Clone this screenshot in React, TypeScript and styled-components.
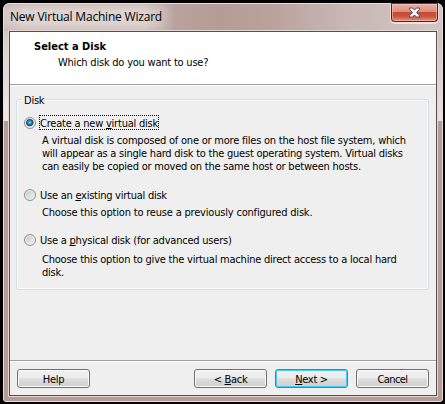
import React from "react";
import styled, { createGlobalStyle } from "styled-components";

const GlobalStyle = createGlobalStyle`
  body { margin: 0; background: #000; overflow: hidden; }
  * { box-sizing: border-box; }
`;

const Screen = styled.div`
  width: 445px;
  height: 404px;
  padding: 3px 2px 2px 3px;
  background: #000;
  color: #000;
  font: 11px/13px "DejaVu Sans Condensed", "DejaVu Sans", sans-serif;
  font-stretch: condensed;
`;

const Window = styled.div`
  width: 440px;
  height: 399px;
  padding: 0 5px 5px;
  border: 1px solid #e6dcda;
  border-radius: 6px 6px 3px 3px;
  background:
    linear-gradient(transparent 27px, #d6cac8 27px, #efeae9 117px, transparent 117px) 0 0 / 5px 100% no-repeat,
    linear-gradient(transparent 27px, #cfc0bd 27px, #e9e2e1 117px, transparent 117px) 100% 0 / 5px 100% no-repeat,
    linear-gradient(rgba(181, 156, 150, 0.35), transparent 7px, transparent 19px, rgba(181, 156, 150, 0.35)) 0 0 / 170px 27px no-repeat,
    linear-gradient(90deg, #d3c6c4 0, #ddd3d1 20px, #ddd3d1 140px, #cfc1be 156px, #b9a29d 171px, #b59c96 215px, #b9a19c 265px, #c9b8b5 345px, #d2c5c2 100%) 0 0 / 100% 27px no-repeat,
    #b59c96;
`;

const TitleBar = styled.div`
  display: flex;
  justify-content: space-between;
  height: 27px;
  margin-right: -1px;
`;

const Title = styled.div`
  padding: 5px 0 0 1px;
  font: 12px/16px "Open Sans", "Noto Sans", sans-serif;
  letter-spacing: -0.2px;
  white-space: nowrap;
`;

const CloseButton = styled.button`
  width: 47px;
  height: 19px;
  margin: -1px 0 0;
  padding: 0 0 1px;
  display: flex;
  align-items: center;
  justify-content: center;
  border: 1px solid #54201c;
  border-top-color: #5b3d3a;
  border-radius: 0 0 4px 4px;
  background: linear-gradient(#eab0a5 0, #de8c7d 45%, #c84a33 50%, #cc523c 72%, #e38e80 100%);
  box-shadow: inset 0 0 0 1px rgba(255, 205, 192, 0.55), 0 1px 0 1px rgba(244, 232, 230, 0.8);
`;

const Client = styled.div`
  display: flex;
  flex-direction: column;
  width: 428px;
  height: 365px;
  border: 1px solid #5a4e4c;
  background: #efefef;
  box-shadow: 0 0 0 1px #e3d7d4;
`;

const Header = styled.header`
  height: 54px;
  padding: 8px 0 0 24px;
  background: #fff;
  border-bottom: 1px solid #fff;
  box-shadow: inset 0 -1px #a0a0a0;
`;

const Text = styled.div<{ $track?: number }>`
  white-space: pre;
  letter-spacing: ${(p) => p.$track ?? -0.22}px;
`;

const Heading = styled(Text)`
  font-weight: bold;
`;

const Question = styled(Text)`
  margin: 3px 0 0 24px;
`;

const Body = styled.main`
  flex: 1;
  padding: 13px 7px 0 6px;
`;

const Group = styled.section`
  height: 191px;
  padding: 0 0 0 7px;
  border: 1px solid #d3dde4;
  border-radius: 3px;
  box-shadow: inset 0 0 0 1px #fafbfc;
`;

const Legend = styled(Text)`
  width: 23px;
  margin-top: -6px;
  padding-left: 1px;
  margin-left: -1px;
  background: #efefef;
`;

const Option = styled.label<{ $top: number }>`
  display: flex;
  align-items: flex-start;
  height: 15px;
  margin-top: ${(p) => p.$top}px;
`;

const Radio = styled.span<{ $checked?: boolean }>`
  flex: none;
  width: 12px;
  height: 12px;
  margin-top: 2px;
  border: 1px solid #8b8f92;
  border-radius: 50%;
  background: ${(p) =>
    p.$checked
      ? "radial-gradient(circle at 47% 45%, #8fdcf8 0, #2b93c4 1.6px, #123f63 3.3px, #dfe4e7 4.2px)"
      : "linear-gradient(135deg, #c3c7cb, #f4f4f4)"};
  box-shadow: inset 0 0 0 1px #f1f1f1;
`;

const OptionText = styled(Text)<{ $focus?: boolean }>`
  height: 15px;
  margin-left: 3px;
  padding-top: 1px;
  border: 1px dotted ${(p) => (p.$focus ? "#000" : "transparent")};
`;

const Description = styled.div<{ $top: number }>`
  margin: ${(p) => p.$top}px 0 0 18px;
`;

const Key = styled.span`
  text-decoration: underline;
  text-decoration-thickness: 1px;
  text-underline-offset: 1px;
  text-decoration-skip-ink: none;
`;

const Footer = styled.footer`
  display: flex;
  height: 35px;
  padding: 9px 7px 0;
  border-top: 1px solid #a0a0a0;
  box-shadow: inset 0 1px #fff;
`;

const PushButton = styled.button<{ $default?: boolean; $left?: number; $track?: number }>`
  width: 73px;
  height: 19px;
  margin: -1px 0 0 ${(p) => p.$left ?? 0}px;
  padding: 2px 0 0;
  color: #000;
  font: inherit;
  letter-spacing: ${(p) => p.$track ?? -0.3}px;
  border: 1px solid ${(p) => (p.$default ? "#3d85ad" : "#707070")};
  border-radius: 3px;
  background: linear-gradient(#f2f2f2 0, #ebebeb 48%, #dcdcdc 52%, #cfcfcf 100%);
  box-shadow: inset 0 0 0 1px ${(p) => (p.$default ? "#48d0f8" : "#fafafa")};
`;

const CloseIcon = () => (
  <svg width="13" height="11" viewBox="0 0 13 11">
    <path
      d="M1.5 1h3.2l1.8 2 1.8-2h3.2v1.3L8.6 5.5l2.9 3.2V10H8.3L6.5 8 4.7 10H1.5V8.7l2.9-3.2-2.9-3.2z"
      fill="#f6f6f6"
      stroke="#525360"
      strokeWidth="1"
      strokeLinejoin="round"
    />
  </svg>
);

export default function App() {
  return (
    <Screen>
      <GlobalStyle />
      <Window>
        <TitleBar>
          <Title>New Virtual Machine Wizard</Title>
          <CloseButton aria-label="Close"><CloseIcon /></CloseButton>
        </TitleBar>
        <Client>
          <Header>
            <Heading $track={0}>Select a Disk</Heading>
            <Question>Which disk do you want to use?</Question>
          </Header>
          <Body>
            <Group>
              <Legend>Disk</Legend>
              <Option $top={8}>
                <Radio $checked />
                <OptionText $focus>Create a new <Key>v</Key>irtual disk</OptionText>
              </Option>
              <Description $top={4}>
                <Text>A virtual disk is composed of one or more files on the host file system, which</Text>
                <Text $track={-0.235}>will appear as a single hard disk to the guest operating system. Virtual disks</Text>
                <Text>can easily be copied or moved on the same host or between hosts.</Text>
              </Description>
              <Option $top={14}>
                <Radio />
                <OptionText $track={-0.25}>Use an <Key>e</Key>xisting virtual disk</OptionText>
              </Option>
              <Description $top={4}>
                <Text $track={-0.19}>Choose this option to reuse a previously configured disk.</Text>
              </Description>
              <Option $top={13}>
                <Radio />
                <OptionText>Use a <Key>p</Key>hysical disk (for advanced users)</OptionText>
              </Option>
              <Description $top={6}>
                <Text>Choose this option to give the virtual machine direct access to a local hard</Text>
                <Text>disk.</Text>
              </Description>
            </Group>
          </Body>
          <Footer>
            <PushButton>Help</PushButton>
            <PushButton $left={104}>&lt; <Key>B</Key>ack</PushButton>
            <PushButton $left={8} $default><Key>N</Key>ext &gt;</PushButton>
            <PushButton $left={8} $track={-0.6}>Cancel</PushButton>
          </Footer>
        </Client>
      </Window>
    </Screen>
  );
}
